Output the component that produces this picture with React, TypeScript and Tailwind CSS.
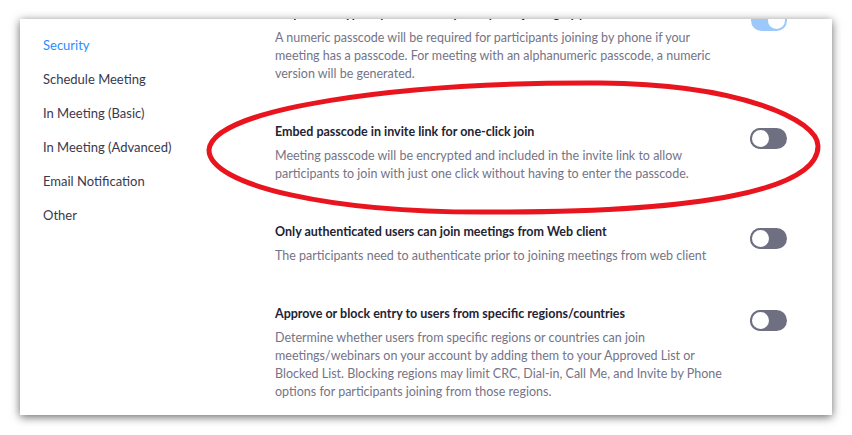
const navItems = [
  { label: 'Security', active: true },
  { label: 'Schedule Meeting' },
  { label: 'In Meeting (Basic)' },
  { label: 'In Meeting (Advanced)' },
  { label: 'Email Notification' },
  { label: 'Other' },
];

const settings = [
  {
    title: 'Require encrypted passcode for participants joining by phone',
    desc: 'A numeric passcode will be required for participants joining by phone if your meeting has a passcode. For meeting with an alphanumeric passcode, a numeric version will be generated.',
    on: true,
  },
  {
    title: 'Embed passcode in invite link for one-click join',
    desc: 'Meeting passcode will be encrypted and included in the invite link to allow participants to join with just one click without having to enter the passcode.',
  },
  {
    title: 'Only authenticated users can join meetings from Web client',
    desc: 'The participants need to authenticate prior to joining meetings from web client',
  },
  {
    title: 'Approve or block entry to users from specific regions/countries',
    desc: 'Determine whether users from specific regions or countries can join meetings/webinars on your account by adding them to your Approved List or Blocked List. Blocking regions may limit CRC, Dial-in, Call Me, and Invite by Phone options for participants joining from those regions.',
  },
];

function Toggle({ on }: { on?: boolean }) {
  if (on) {
    return (
      <div className="w-[36px] h-[21px] rounded-full bg-[#9cc8fb] flex items-center justify-end px-[2px] shrink-0">
        <div className="w-[17px] h-[17px] rounded-full bg-white" />
      </div>
    );
  }
  return (
    <div className="w-[37px] h-[21px] rounded-full bg-[#6e7082] flex items-center shrink-0">
      <div className="w-[21px] h-[21px] rounded-full bg-white border-2 border-[#6e7082]" />
    </div>
  );
}

export default function App() {
  return (
    <div className="relative w-[852px] h-[435px] bg-white overflow-hidden font-['Lato',sans-serif]">
      <div className="ml-[20px] mt-[19px] w-[812px] h-[396px] bg-white shadow-[0_2px_9px_rgba(0,0,0,0.6)] overflow-hidden flex">
        <nav className="w-[255px] pl-[23px] pt-[16px] flex flex-col gap-[14px] text-[13px] leading-[20px] text-[#39394d]">
          {navItems.map((item) => (
            <div key={item.label} className={item.active ? 'text-[#2d8cff]' : ''}>
              {item.label}
            </div>
          ))}
        </nav>
        <div className="flex-1 pr-[45px] mt-[-14px] flex flex-col gap-[40px]">
          {settings.map((s) => (
            <div key={s.title} className="flex justify-between">
              <div className="w-[455px]">
                <div className="text-[12.5px] leading-[18px] font-bold text-[#232333] whitespace-nowrap">{s.title}</div>
                <p className="mt-[6px] text-[12.5px] leading-[18px] text-[#747487]">{s.desc}</p>
              </div>
              <div className="pt-[5px]">
                <Toggle on={s.on} />
              </div>
            </div>
          ))}
        </div>
      </div>
      <svg className="absolute inset-0 pointer-events-none" width="852" height="435" viewBox="0 0 852 435">
        <path
          d="M 600 83 C 740 84, 818 120, 818 146 C 818 190, 700 212, 500 212 C 330 214, 209 185, 209 150 C 212 108, 400 82, 600 83 Z"
          fill="none"
          stroke="#e8151f"
          strokeWidth="5"
        />
      </svg>
    </div>
  );
}
